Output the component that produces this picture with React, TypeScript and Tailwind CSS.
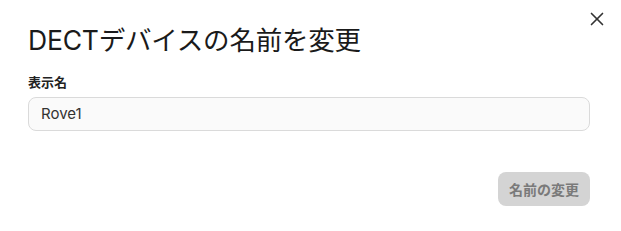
import React from 'react';

const App: React.FC = () => {
  return (
    <div
      className="relative w-[621px] h-[231px] bg-white overflow-hidden rounded-tr-[6px] rounded-br-[6px]"
      style={{ fontFamily: 'Inter, "Noto Sans CJK JP", sans-serif' }}
    >
      <button className="absolute top-[8px] right-[13px] p-0 text-[#333]" aria-label="Close">
        <svg width="22" height="22" viewBox="0 0 24 24" fill="none" stroke="currentColor" strokeWidth="1.8" strokeLinecap="round">
          <line x1="18" y1="6" x2="6" y2="18" />
          <line x1="6" y1="6" x2="18" y2="18" />
        </svg>
      </button>
      <div className="flex flex-col pl-[28px] pr-[31px] pt-[22px]">
        <h2 className="text-[26.5px] leading-[36px] text-[#1a1a1a] tracking-[-0.2px]">DECTデバイスの名前を変更</h2>
        <label className="mt-[15px] text-[13px] leading-[18px] font-bold text-[#222]">表示名</label>
        <div className="mt-[6px] h-[34px] flex items-center px-[12px] rounded-[8px] border border-[#dadada] bg-[#fafafa] text-[15px] text-[#333]">
          Rove1
        </div>
        <div className="flex justify-end mt-[41px]">
          <button className="h-[34px] px-[11px] rounded-[8px] bg-[#d4d4d4] text-[14px] font-bold text-[#7a7a7a]">
            名前の変更
          </button>
        </div>
      </div>
    </div>
  );
};

export default App;
